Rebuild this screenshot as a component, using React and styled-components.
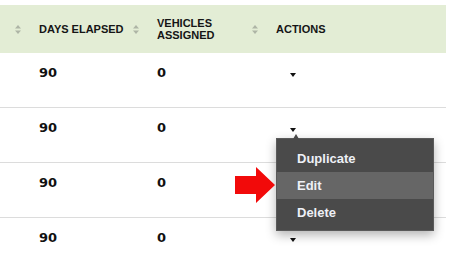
import React from "react";
import styled, { createGlobalStyle } from "styled-components";

const GlobalStyle = createGlobalStyle`
  body {
    margin: 0;
    background: #ffffff;
    font-family: "Liberation Sans", Arial, sans-serif;
    overflow: hidden;
  }
`;

const rows = [
  { days: 90, vehicles: 0 },
  { days: 90, vehicles: 0, open: true },
  { days: 90, vehicles: 0 },
  { days: 90, vehicles: 0 },
];

const SortIcon = () => (
  <svg width="6" height="9" viewBox="0 0 6 9">
    <polygon points="0,3.5 3,0 6,3.5" fill="#aeb5a6" />
    <polygon points="0,5.5 6,5.5 3,9" fill="#aeb5a6" />
  </svg>
);

const RedArrow = () => (
  <svg width="41" height="36" viewBox="0 0 41 36">
    <polygon points="0,9 21,9 21,0 40,18 21,36 21,27 0,27" fill="#f20a0a" />
  </svg>
);

export default function App() {
  return (
    <>
      <GlobalStyle />
      <Page>
        <Table>
          <Header>
            <HeadCell $nowrap>
              <SortIcon />
              <span>DAYS ELAPSED</span>
            </HeadCell>
            <HeadCell>
              <SortIcon />
              <span>VEHICLES ASSIGNED</span>
            </HeadCell>
            <HeadCell>
              <SortIcon />
              <span>ACTIONS</span>
            </HeadCell>
          </Header>
          {rows.map((r, i) => (
            <Row key={i}>
              <Cell>{r.days}</Cell>
              <Cell>{r.vehicles}</Cell>
              <ActionCell>
                <Caret />
                {r.open && (
                  <Menu>
                    <Pointer>
                      <RedArrow />
                    </Pointer>
                    <MenuItem>Duplicate</MenuItem>
                    <MenuItem $active>Edit</MenuItem>
                    <MenuItem>Delete</MenuItem>
                  </Menu>
                )}
              </ActionCell>
            </Row>
          ))}
        </Table>
      </Page>
    </>
  );
}

const Page = styled.div`
  padding-top: 5px;
  height: 268px;
  box-sizing: border-box;
`;

const Table = styled.div`
  width: 446px;
`;

const Header = styled.div`
  display: grid;
  grid-template-columns: 118px 119px 1fr;
  height: 48px;
  background: #e3edd5;
`;

const HeadCell = styled.div`
  display: flex;
  align-items: center;
  gap: 18px;
  padding-left: 15px;
  padding-right: 4px;
  font-size: 11px;
  font-weight: bold;
  line-height: 12px;
  color: #151515;
  white-space: ${(p) => (p.$nowrap ? "nowrap" : "normal")};

  & svg {
    flex: none;
  }
`;

const Row = styled.div`
  display: grid;
  grid-template-columns: 118px 119px 1fr;
  height: 55px;
  box-sizing: border-box;
  border-bottom: 1px solid #dcdcdc;
`;

const Cell = styled.div`
  padding: 12px 0 0 39px;
  font-family: "DejaVu Sans", Verdana, sans-serif;
  font-size: 13px;
  font-weight: bold;
  line-height: 16px;
  color: #111111;
`;

const ActionCell = styled.div`
  position: relative;
  padding: 20px 0 0 53px;
`;

const Caret = styled.div`
  width: 0;
  height: 0;
  border-left: 3.5px solid transparent;
  border-right: 3.5px solid transparent;
  border-top: 4px solid #111111;
`;

const Menu = styled.div`
  position: absolute;
  top: 30px;
  left: 39px;
  width: 158px;
  padding: 6px 0 4px;
  box-sizing: border-box;
  background: #4a4a4a;
  border: 1px solid #5a5a5a;
  box-shadow: 0 4px 10px rgba(0, 0, 0, 0.3);
  z-index: 2;

  &::before {
    content: "";
    position: absolute;
    top: -5px;
    left: 16px;
    border-left: 3.5px solid transparent;
    border-right: 3.5px solid transparent;
    border-bottom: 5px solid #4a4a4a;
  }
`;

const MenuItem = styled.div`
  height: 27px;
  display: flex;
  align-items: center;
  padding-left: 20px;
  font-size: 13px;
  font-weight: bold;
  color: #eef0f6;
  background: ${(p) => (p.$active ? "#666666" : "transparent")};
`;

const Pointer = styled.div`
  position: absolute;
  left: -42px;
  top: 28px;
  line-height: 0;
`;
